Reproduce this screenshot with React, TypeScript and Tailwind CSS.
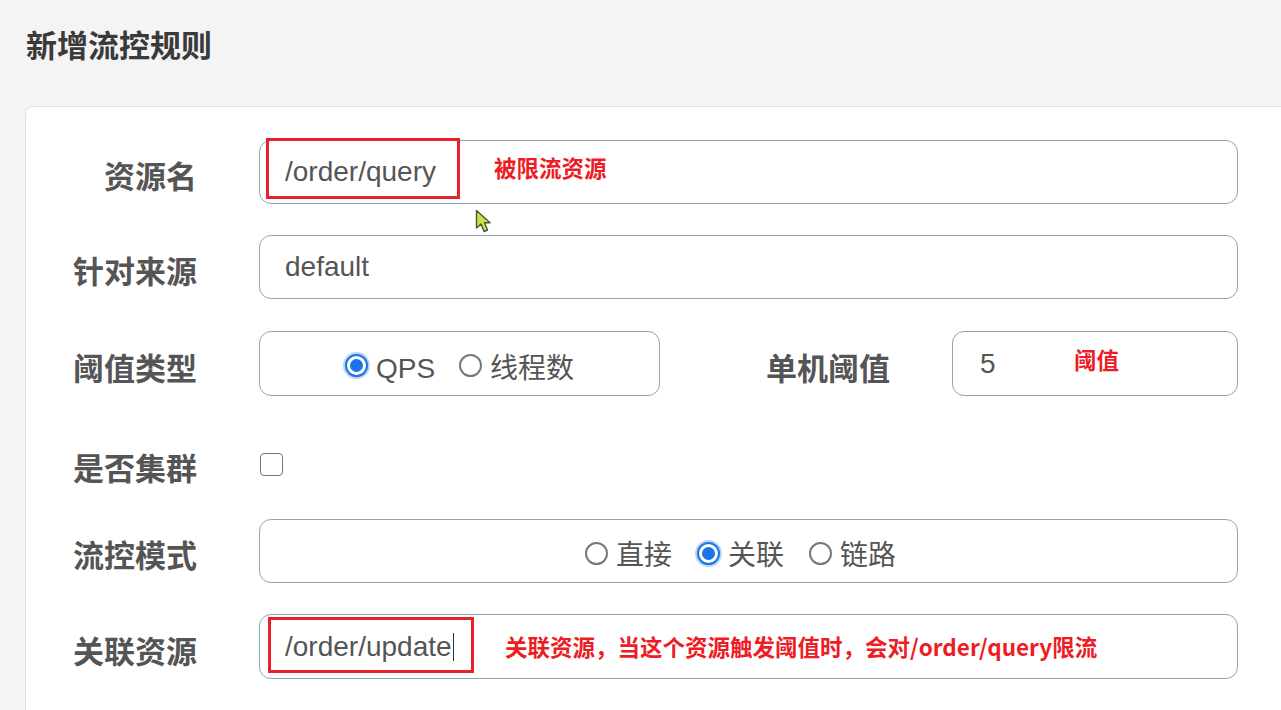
import React from "react";

const Radio = ({ checked, label }: { checked?: boolean; label: string }) => {
  return (
    <div className="flex items-center">
      {checked ? (
        <span className="w-[23px] h-[23px] rounded-full border-2 border-[#1a73e8] bg-white flex items-center justify-center ring-2 ring-[#b9d5f8]">
          <span className="w-[13px] h-[13px] rounded-full bg-[#1a73e8]" />
        </span>
      ) : (
        <span className="w-[23px] h-[23px] rounded-full border-2 border-[#777] bg-white" />
      )}
      <span className="ml-[8px] mt-[6px] text-[28px] leading-[34px] text-[#555]">{label}</span>
    </div>
  );
};

const Label = ({ text, width }: { text: string; width: string }) => {
  return (
    <div
      className={`${width} text-right mt-[6px] text-[31px] leading-[36px] font-bold text-[#555] font-['Noto_Sans_CJK_SC',sans-serif]`}
    >
      {text}
    </div>
  );
};

const box =
  "h-[64px] border-[1.5px] border-[#8ea7b5] rounded-[12px] bg-white relative flex items-center";

const App = () => {
  return (
    <div className="w-[1281px] h-[710px] overflow-hidden bg-[#f4f4f4] relative font-['Liberation_Sans','Noto_Sans_CJK_SC',sans-serif]">
      <div className="h-[106px] pl-[26px] pt-[26px]">
        <h1 className="text-[31px] leading-[36px] font-bold text-[#3a3a3a] font-['Noto_Sans_CJK_SC',sans-serif]">
          新增流控规则
        </h1>
      </div>

      <div className="ml-[25px] w-[1300px] h-[620px] bg-white border border-[#e3e3e3] rounded-tl-[8px] pt-[33px]">
        {/* 资源名 */}
        <div className="flex items-center">
          <Label text="资源名" width="w-[171px]" />
          <div className={`${box} ml-[62px] w-[979px] pl-[25px]`}>
            <span className="text-[28px] text-[#555]">/order/query</span>
            <div className="absolute left-[6px] top-[-3px] w-[194px] h-[61px] border-[3px] border-[#e8202a]" />
            <span className="absolute left-[234px] top-[10px] text-[22.5px] font-bold text-[#ee1c25] font-['Noto_Sans_CJK_SC',sans-serif]">
              被限流资源
            </span>
          </div>
        </div>

        {/* 针对来源 */}
        <div className="flex items-center mt-[31px]">
          <Label text="针对来源" width="w-[171px]" />
          <div className={`${box} ml-[62px] w-[979px] pl-[25px]`}>
            <span className="text-[28px] text-[#555]">default</span>
          </div>
        </div>

        {/* 阈值类型 / 单机阈值 */}
        <div className="flex items-center mt-[32px]">
          <Label text="阈值类型" width="w-[171px]" />
          <div className={`${box} ml-[62px] w-[401px] h-[65px] justify-center gap-[24px] pt-[4px]`}>
            <Radio checked label="QPS" />
            <Radio label="线程数" />
          </div>
          <Label text="单机阈值" width="w-[230px]" />
          <div className={`${box} ml-[62px] w-[286px] h-[65px] pl-[27px]`}>
            <span className="text-[28px] text-[#555]">5</span>
            <span className="absolute left-[121px] top-[11px] text-[22.5px] font-bold text-[#ee1c25] font-['Noto_Sans_CJK_SC',sans-serif]">
              阈值
            </span>
          </div>
        </div>

        {/* 是否集群 */}
        <div className="flex items-center h-[123px] pt-[13px]">
          <Label text="是否集群" width="w-[171px]" />
          <div className="ml-[63px] w-[23px] h-[23px] rounded-[4px] border-[1.5px] border-[#777] bg-white" />
        </div>

        {/* 流控模式 */}
        <div className="flex items-center">
          <Label text="流控模式" width="w-[171px]" />
          <div className={`${box} ml-[62px] w-[979px] justify-center gap-[25px] pr-[16px] pt-[4px]`}>
            <Radio label="直接" />
            <Radio checked label="关联" />
            <Radio label="链路" />
          </div>
        </div>

        {/* 关联资源 */}
        <div className="flex items-center mt-[31px]">
          <Label text="关联资源" width="w-[171px]" />
          <div className={`${box} ml-[62px] w-[979px] h-[65px] pl-[25px]`}>
            <span className="text-[28px] text-[#555]">/order/update</span>
            <span className="ml-[1px] w-[1.5px] h-[28px] bg-[#333]" />
            <div className="absolute left-[8px] top-[2px] w-[206px] h-[56px] border-[3px] border-[#e8202a]" />
            <span className="absolute left-[245px] top-[15px] text-[22.5px] font-bold text-[#ee1c25] font-['Noto_Sans_CJK_SC',sans-serif]">
              关联资源，当这个资源触发阈值时，会对/order/query限流
            </span>
          </div>
        </div>
      </div>

      {/* mouse pointer */}
      <svg
        className="absolute left-[475px] top-[209px]"
        width="18"
        height="26"
        viewBox="0 0 18 26"
      >
        <path
          d="M1.5 1.5 L1.5 19 L6 15 L9 22.5 L12.5 21 L9.5 13.8 L15 13.8 Z"
          fill="#c6e04a"
          stroke="#4a5a2a"
          strokeWidth="1.4"
          strokeLinejoin="round"
        />
      </svg>
    </div>
  );
};

export default App;
